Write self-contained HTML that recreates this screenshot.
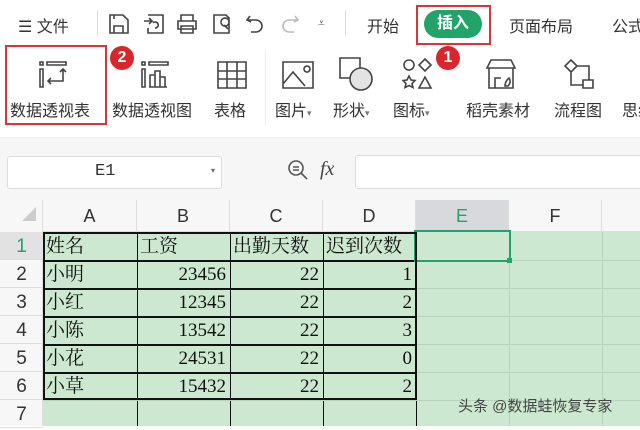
<!DOCTYPE html><html><head><meta charset="utf-8"><style>
*{margin:0;padding:0;box-sizing:border-box}
body{width:640px;height:426px;overflow:hidden;background:#fff;position:relative;font-family:"Liberation Sans","Noto Sans CJK SC",sans-serif;color:#333}
.a{position:absolute}
.t{font-size:16px;white-space:nowrap}
svg{position:absolute;fill:none;stroke:#444;stroke-width:1.6}
.cell{position:absolute;font-family:"Liberation Serif","Noto Serif CJK SC",serif;font-size:19px;color:#111;line-height:30px}
</style></head><body>
<div class="a t" style="left:18px;top:13px">☰ 文件</div>
<div class="a" style="left:97px;top:10px;width:1px;height:26px;background:#ddd"></div>
<svg style="left:108px;top:13px" width="22" height="22" viewBox="0 0 22 22"><path d="M2 2h13l5 5v13H2z M6 20v-7h9v7 M6 2v4"/></svg>
<svg style="left:143px;top:13px" width="22" height="22" viewBox="0 0 22 22"><path d="M5 2h15v18H5v-5 M1 8h8l-3-3 M9 8l-3 3 M10 10a3 3 0 1 1 2 5"/></svg>
<svg style="left:176px;top:13px" width="22" height="22" viewBox="0 0 22 22"><path d="M5 8V2h12v6 M2 8h18v8H2z M5 13h12v7H5z"/></svg>
<svg style="left:211px;top:13px" width="22" height="22" viewBox="0 0 22 22"><path d="M3 2h12l3 3v15H3z M10 9a4 4 0 1 1 0 .1 M13 12l4 4"/></svg>
<svg style="left:245px;top:13px" width="20" height="22" viewBox="0 0 20 22"><path d="M5 3L2 7l4 2 M2 7h9a6 6 0 0 1 0 12H6"/></svg>
<svg style="left:280px;top:13px;stroke:#bbb" width="20" height="22" viewBox="0 0 20 22"><path d="M15 3l3 4-4 2 M18 7H9a6 6 0 0 0 0 12h5"/></svg>
<div class="a" style="left:318px;top:16px;font-size:12px;color:#555">⩡</div>
<div class="a" style="left:345px;top:10px;width:1px;height:26px;background:#ddd"></div>
<div class="a t" style="left:367px;top:13px">开始</div>
<div class="a" style="left:416px;top:5px;width:75px;height:40px;border:2px solid #d9363b"></div>
<div class="a t" style="left:424px;top:10px;width:58px;height:28px;border-radius:14px;background:#21a36a;color:#fff;text-align:center;line-height:28px;font-weight:bold">插入</div>
<div class="a t" style="left:509px;top:13px">页面布局</div>
<div class="a t" style="left:612px;top:13px">公式</div>
<div class="a" style="left:5px;top:45px;width:102px;height:80px;border:2px solid #d9363b"></div>
<svg style="left:38px;top:60px" width="30" height="30" viewBox="0 0 30 30"><path d="M2 2h3v3H2z M9 2h19v3H9z M2 9h3v18H2z M25 9v12H10 M13 18l-3 3 3 3 M22 12l3-3 3 3"/></svg>
<div class="a t" style="left:10px;top:97px">数据透视表</div>
<div class="a" style="left:110px;top:46px;width:24px;height:24px;border-radius:12px;background:#d8262d;color:#fff;font-weight:bold;font-size:16px;text-align:center;line-height:24px">2</div>
<svg style="left:140px;top:60px" width="30" height="30" viewBox="0 0 30 30"><path d="M2 2h3v3H2z M9 2h19v3H9z M2 9h3v18H2z M10 27V15h5v12 M15 27V11h5v16 M20 27V17h5v10 M9 27h18"/></svg>
<div class="a t" style="left:112px;top:97px">数据透视图</div>
<svg style="left:216px;top:60px" width="32" height="30" viewBox="0 0 32 30"><path d="M2 2h28v26H2z M2 11h28 M2 19h28 M11 2v26 M21 2v26"/></svg>
<div class="a t" style="left:214px;top:97px">表格</div>
<div class="a" style="left:265px;top:50px;width:1px;height:75px;background:#eee"></div>
<svg style="left:281px;top:60px" width="34" height="30" viewBox="0 0 34 30"><path d="M2 2h30v26H2z M2 24l10-12 12 14 M23 9a3 3 0 1 1 0 .1"/></svg>
<div class="a t" style="left:275px;top:97px">图片<span style="font-size:9px;color:#777">▾</span></div>
<svg style="left:338px;top:56px" width="36" height="36" viewBox="0 0 36 36"><path d="M2 2h20v20H2z"/><circle cx="23" cy="23" r="11" fill="#e3e3e3"/></svg>
<div class="a t" style="left:333px;top:97px">形状<span style="font-size:9px;color:#777">▾</span></div>
<svg style="left:402px;top:58px" width="32" height="32" viewBox="0 0 32 32"><circle cx="7" cy="7" r="5"/><path d="M23 1l6 6-6 6-6-6z M7 18l2 4 4 .5-3 3 1 4-4-2-4 2 1-4-3-3 4-.5z M23 19l6 11H17z"/></svg>
<div class="a t" style="left:393px;top:97px">图标<span style="font-size:9px;color:#777">▾</span></div>
<div class="a" style="left:436px;top:46px;width:24px;height:24px;border-radius:12px;background:#d8262d;color:#fff;font-weight:bold;font-size:16px;text-align:center;line-height:24px">1</div>
<svg style="left:485px;top:58px" width="32" height="32" viewBox="0 0 32 32"><path d="M6 2h20l4 8H2z M4 10v20h24V10 M10 30V20h6 M20 28c0-5 4-8 4-8s3 4-1 8z"/></svg>
<div class="a t" style="left:466px;top:97px">稻壳素材</div>
<svg style="left:563px;top:58px" width="32" height="32" viewBox="0 0 32 32"><path d="M8 2l6 6-6 6-6-6z M14 8h12v14 M8 14v13h12 M20 22h10v8H20z" /></svg>
<div class="a t" style="left:554px;top:97px">流程图</div>
<div class="a t" style="left:622px;top:97px">思维</div>
<div class="a" style="left:0;top:137px;width:640px;height:63px;background:#f6f6f6;border-top:1px solid #eee"></div>
<div class="a" style="left:7px;top:156px;width:215px;height:33px;background:#fff;border:1px solid #ddd;border-radius:3px"></div>
<div class="a" style="left:95px;top:162px;font-family:'Liberation Mono',monospace;font-size:17px">E1</div>
<div class="a" style="left:211px;top:166px;font-size:8px;color:#666">▾</div>
<svg style="left:287px;top:159px;stroke:#555" width="22" height="22" viewBox="0 0 22 22"><circle cx="9" cy="9" r="7"/><path d="M6 8h6 M6 11h6 M14 14l6 6"/></svg>
<div class="a" style="left:320px;top:158px;font-family:'Liberation Serif',serif;font-style:italic;font-size:20px;color:#444">fx</div>
<div class="a" style="left:355px;top:155px;width:290px;height:34px;background:#fff;border:1px solid #ddd;border-radius:3px"></div>
<div class="a" style="left:0;top:200px;width:640px;height:32px;background:#f7f7f7;border-bottom:1px solid #ddd"></div>
<div class="a" style="left:0;top:200px;width:43px;height:226px;background:#f7f7f7;border-right:1px solid #ddd"></div>
<div class="a" style="left:416px;top:200px;width:93px;height:32px;background:#d8d9dc"></div>
<div class="a" style="left:0;top:232px;width:43px;height:28px;background:#e2e2e2"></div>
<svg style="left:22px;top:207px;stroke:none;fill:#ccc" width="16" height="16"><path d="M14 0v14H0z"/></svg>
<div class="a" style="left:43px;top:232px;width:597px;height:194px;background:#cde8d0"></div>
<div id="g"></div>
<div class="a" style="left:414px;top:230px;width:97px;height:32px;border:2px solid #21a36a"></div>
<div class="a" style="left:507px;top:258px;width:5px;height:5px;background:#21a36a"></div>
<div class="a" style="left:43px;top:232px;width:374px;height:168px;border:2px solid #111"></div>
<div class="a" style="left:458px;top:395px;font-size:15px;color:#444;font-family:'Liberation Sans','Noto Sans CJK SC',sans-serif">头条 @数据蛙恢复专家</div>
<script>
var cols=[43,137,230,323,416,509,602,700],rows=[232,260,288,316,344,372,400,428],h='';
var L='ABCDEFG';
for(var i=0;i<7;i++){h+='<div class="a" style="left:'+cols[i]+'px;top:200px;width:'+(cols[i+1]-cols[i])+'px;height:32px;text-align:center;line-height:32px;font-size:18px;color:'+(i==4?'#21a36a':'#333')+';border-right:1px solid #ddd">'+L[i]+'</div>';}
for(var r=0;r<7;r++){h+='<div class="a" style="left:0;top:'+rows[r]+'px;width:43px;height:28px;text-align:center;line-height:30px;font-size:19px;color:'+(r==0?'#21a36a':'#333')+';border-bottom:1px solid #ddd">'+(r+1)+'</div>';}
for(var i=1;i<7;i++)h+='<div class="a" style="left:'+cols[i]+'px;top:232px;width:1px;height:194px;background:'+(i<5?'#111':'#b9d4bc')+'"></div>';
for(var r=1;r<7;r++){h+='<div class="a" style="left:43px;top:'+rows[r]+'px;width:597px;height:1px;background:#b9d4bc"></div>';
if(r<6)h+='<div class="a" style="left:43px;top:'+rows[r]+'px;width:374px;height:2px;background:#111"></div>';}
var d=[['姓名','工资','出勤天数','迟到次数'],['小明','23456','22','1'],['小红','12345','22','2'],['小陈','13542','22','3'],['小花','24531','22','0'],['小草','15432','22','2']];
for(var r=0;r<6;r++)for(var c=0;c<4;c++){var al=(r==0||c==0)?'left':'right';h+='<div class="cell" style="left:'+(cols[c]+3)+'px;top:'+rows[r]+'px;width:'+(cols[c+1]-cols[c]-7)+'px;text-align:'+al+'">'+d[r][c]+'</div>';}
document.getElementById('g').innerHTML=h;
</script>
</body></html>
